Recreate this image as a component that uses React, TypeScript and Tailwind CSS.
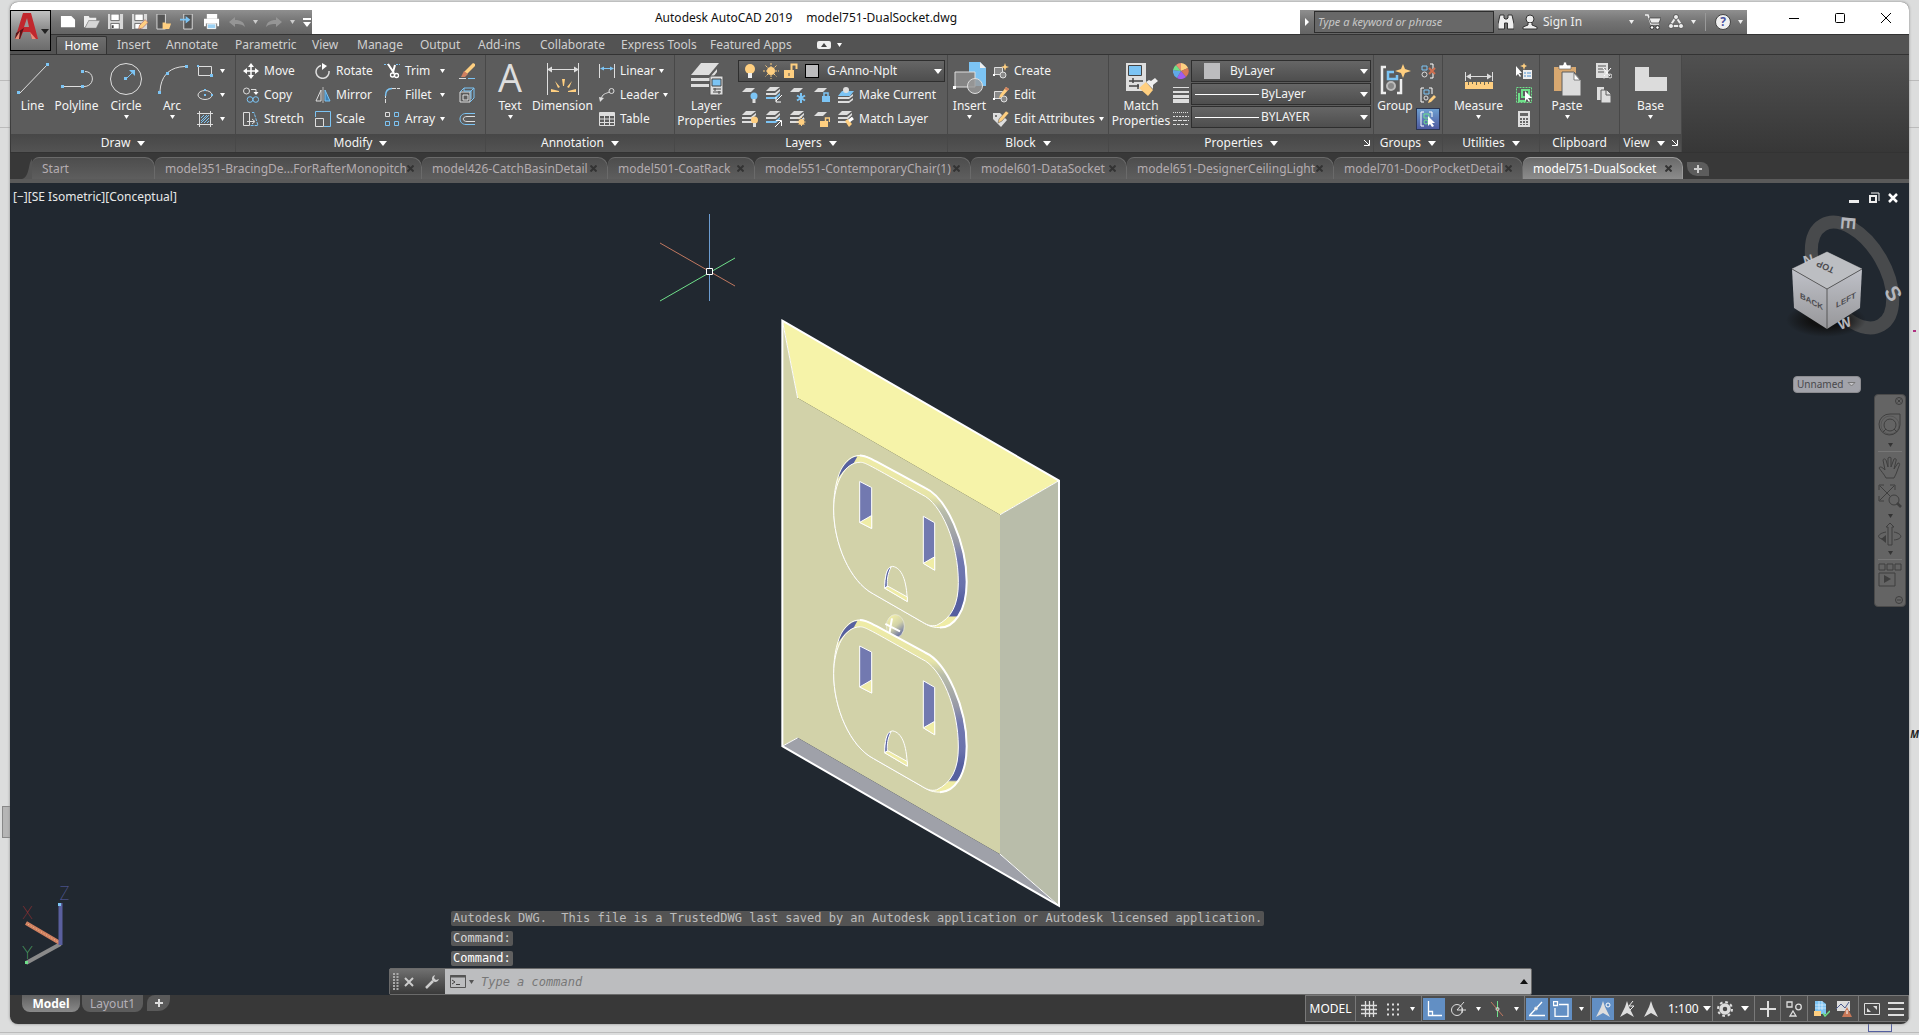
import React from "react";

type Kids = { children?: React.ReactNode };
const W = "#dedede";
const B = "#7cc4f4";
const Y = "#ffcf80";
const G = "#6fe08a";

function Ico({ s = 16, v, children }: Kids & { s?: number; v?: number }) {
  const n = v ?? s;
  return (
    <svg width={s} height={s} viewBox={`0 0 ${n} ${n}`} fill="none" stroke={W} strokeWidth="1" className="shrink-0" aria-hidden="true">
      {children}
    </svg>
  );
}

function Arrow({ big = false, color = "#fff" }: { big?: boolean; color?: string }) {
  return (
    <svg width={big ? 8 : 5} height={big ? 5 : 4} viewBox="0 0 8 5" preserveAspectRatio="none" className="shrink-0" aria-hidden="true">
      <path d="M0 0h8L4 5z" fill={color} />
    </svg>
  );
}

const Sq = ({ x, y, c = B, r = 3 }: { x: number; y: number; c?: string; r?: number }) => (
  <rect x={x} y={y} width={r} height={r} fill={c} stroke="none" />
);

/* ---------- small ribbon icons ---------- */
const icons = {
  rect: (
    <Ico>
      <path d="M1.500 3.500h13v9h-13z" />
      <Sq x={0} y={2} r={2} /><Sq x={13} y={11} />
    </Ico>
  ),
  ellipse: (
    <Ico>
      <ellipse cx="8" cy="8" rx="7" ry="4.500" />
      <Sq x={7} y={7} r={2} /><Sq x={7} y={2} r={2} /><Sq x={14} y={7} r={2} />
    </Ico>
  ),
  hatch: (
    <Ico>
      <path d="M2.500 0v16M13.500 0v16M0 2.500h16M0 13.500h16" />
      <path d="M4 7l3-3M4 10l6-6M4 12l8-8M7 12l5-5M10 12l2-2" stroke={B} />
    </Ico>
  ),
  move: (
    <Ico>
      <path d="M8 2v12M2 8h12" strokeWidth="1.500" stroke="#fff" />
      <path d="M8 0l3 4H5zM8 16l3-4H5zM0 8l4-3v6zM16 8l-4-3v6z" fill="#fff" stroke="none" />
    </Ico>
  ),
  rotate: (
    <Ico>
      <path d="M6 2.500A6.500 6.500 0 1 0 14 8" strokeWidth="1.500" />
      <path d="M7 0l5 3-5 4z" fill="#fff" stroke="none" />
    </Ico>
  ),
  trim: (
    <Ico>
      <path d="M0 1.500h4M12 1.500h4" stroke={B} strokeDasharray="2 1" />
      <path d="M4 1l6 9M11 2L9 9" stroke="#fff" strokeWidth="2" />
      <circle cx="8.500" cy="12" r="2" stroke="#fff" strokeWidth="1.300" /><circle cx="12.500" cy="12.500" r="2" stroke="#fff" strokeWidth="1.300" />
    </Ico>
  ),
  erase: (
    <Ico>
      <path d="M5 9L14 0l2 1v2l-8 8z" fill={Y} stroke="none" />
      <path d="M5 8l4 3-3 3H2z" fill="#d08060" stroke="none" />
      <path d="M0 15.500h7" /><path d="M9 15.500h7" stroke={B} />
    </Ico>
  ),
  copy: (
    <Ico>
      <circle cx="3.500" cy="4" r="3" />
      <path d="M8 2.500h5V6" /><path d="M10.500 5h5L13 8z" fill="#fff" stroke="none" />
      <circle cx="7" cy="12.500" r="2.800" stroke={B} /><circle cx="12.800" cy="12.500" r="2.800" stroke={B} />
    </Ico>
  ),
  mirror: (
    <Ico>
      <path d="M6 3v11H1z" /><path d="M10 3v11h5z" fill="#3d83b8" stroke={B} /><path d="M8 0v16" strokeWidth=".7" />
    </Ico>
  ),
  fillet: (
    <Ico>
      <path d="M1.500 16V9M8 1.500h8" strokeDasharray="4 1" /><path d="M1.500 9C1.500 4 4 1.500 8 1.500" stroke={B} strokeWidth="1.500" />
    </Ico>
  ),
  explode: (
    <Ico>
      <path d="M1 5h10v10H1z" /><path d="M4 8h5v5H4z" />
      <path d="M1 5l4-4h10v10l-4 4M11 5l4-4M5 1v3h7v8" stroke={B} />
    </Ico>
  ),
  stretch: (
    <Ico>
      <path d="M.5 1.500h6v13h-6zM4 10.500h7M9 8l3 2.500L9 13" /><path d="M9 1.500h2l4 13H7" stroke={B} strokeDasharray="3 1" />
    </Ico>
  ),
  scale: (
    <Ico>
      <path d="M.5 6V.5h15v15H9" stroke={B} /><path d="M.5 7.500h8v8h-8z" />
    </Ico>
  ),
  array: (
    <Ico>
      <path d="M1.500 1.500h4v4h-4z" /><path d="M10.500 1.500h4v4h-4zM1.500 10.500h4v4h-4zM10.500 10.500h4v4h-4z" stroke={B} />
    </Ico>
  ),
  offset: (
    <Ico>
      <path d="M16 2.500H7C-1 2.500-1 13.500 7 13.500h9" stroke={B} /><path d="M16 5.500H8c-5 0-5 5 0 5h8" />
    </Ico>
  ),
  linear: (
    <Ico>
      <path d="M.5 1v14M15.500 1v14" /><path d="M2 5.500h12" stroke={B} /><path d="M1 5.500l4-2v4zM15 5.500l-4-2v4z" fill={B} stroke="none" />
    </Ico>
  ),
  leader: (
    <Ico>
      <path d="M2 13C3 6 7 7 10 5" /><circle cx="12.500" cy="4" r="2.500" /><path d="M0 10l5 1-4 4z" fill={W} stroke="none" />
    </Ico>
  ),
  table: (
    <Ico>
      <path d="M.5 1.500h15v13H.5zM.5 4.500h15M.5 8h15M.5 11.500h15M5.500 4v10M10.500 4v10" /><path d="M1 3h15" strokeWidth="2" />
    </Ico>
  ),
  create: (
    <Ico>
      <path d="M1.500 4.500h8v7h-8z" fill="#888" /><circle cx="10" cy="12" r="3" fill="#888" /><Sq x={0} y={11} c="#fff" r={2} />
      <path d="M12 0l1 3 3 1-3 1-1 3-1-3-3-1 3-1z" fill={Y} stroke="none" />
    </Ico>
  ),
  editBlk: (
    <Ico>
      <path d="M1.500 4.500h8v7h-8z" fill="#888" /><circle cx="11" cy="12" r="3" fill="#888" /><Sq x={0} y={11} c="#fff" r={2} />
      <path d="M13 0l3 2-7 8-3 1 1-3z" fill={Y} stroke="none" /><path d="M13 0l3 2-1.500 2-3-2z" fill="#d08060" stroke="none" />
    </Ico>
  ),
  editAtt: (
    <Ico>
      <path d="M0 2h7l7 7-6 7-8-8z" fill={W} stroke="none" /><circle cx="3" cy="5" r="1" fill="#555" stroke="none" />
      <path d="M13 0l3 2-7 8-4 2 1-4z" fill={Y} stroke="#555" strokeWidth=".5" />
    </Ico>
  ),
};

const Sheet = () => <path d="M4 1h9L9 5H0z" fill={W} stroke="none" />;
const Stack = ({ c = W }: { c?: string }) => (
  <g stroke="none">
    <path d="M4 0h10L9 4H0z" fill={W} />
    <path d="M0 6h9l5-4v2L10 8H0z" fill={W} />
    <path d="M0 10h9l5-4v2l-4 4H0z" fill={c} />
  </g>
);
const layerIcons: [string, React.ReactNode][][] = [
  [
    ["Off", <><Sheet /><circle cx="12" cy="9" r="3.500" fill={B} stroke="none" /><path d="M12 12v4" strokeWidth="3" /></>],
    ["Isolate", <><Stack c={B} /><path d="M16 8l-6 6M10 10v5h5" stroke="#fff" /></>],
    ["Freeze", <><Sheet /><path d="M11 6v10M7 8.500l8 5M15 8.500l-8 5" stroke={B} strokeWidth="2" /></>],
    ["Lock", <><Sheet /><path d="M8 9h8v6H8z" fill={B} stroke="none" /><path d="M10 9V6h4v3" stroke={B} strokeWidth="1.500" /></>],
    ["Make Current", <><path d="M0 10h11l4-3v2l-4 3H0zM0 14h11l4-3v2l-4 3H0z" fill={W} stroke="none" /><path d="M4 4h12l-4 5H0z" fill={B} stroke="none" /><circle cx="8" cy="3" r="3" fill={W} stroke="none" /></>],
  ],
  [
    ["Turn All On", <><Stack /><circle cx="12.500" cy="9" r="3.500" fill={Y} stroke="none" /><path d="M12.500 12v4" strokeWidth="3" /></>],
    ["Unisolate", <><Stack c={B} /><path d="M9 16l6-6M10 9.500h5.500V15" stroke="#fff" /></>],
    ["Thaw All", <><Stack /><circle cx="11.500" cy="11" r="3" fill={Y} stroke="none" /><path d="M11.500 6v10M6.500 11h10M8 7.500l7 7M15 7.500l-7 7" stroke={Y} strokeDasharray="1 1" /></>],
    ["Unlock", <><Sheet /><path d="M6 10h8v6H6z" fill={Y} stroke="none" /><path d="M11.500 10V7h4v4" stroke={Y} strokeWidth="1.500" /></>],
    ["Match Layer", <><Stack /><path d="M7 10l3-2 4 5-3 3z" fill={Y} stroke="none" /><path d="M11 10l4-3" stroke="#fff" strokeWidth="3" /></>],
  ],
];

/* ---------- ribbon parts ---------- */
function Panel({ title, w, drop = true, corner = false, children }: Kids & { title: string; w: string; drop?: boolean; corner?: boolean }) {
  return (
    <section aria-label={title} className={`${w} flex shrink-0 flex-col border-r border-[#484848] bg-[#5c5c5c]`}>
      <div className="flex h-20 items-start pt-1">{children}</div>
      <div className="relative flex flex-1 items-center justify-center gap-[7px] bg-linear-to-b from-[#474747] to-[#535353]">
        <span>{title}</span>
        {drop && <Arrow big />}
        {corner && (
          <svg width="6" height="6" viewBox="0 0 6 6" className={title === "View" ? "" : "absolute right-[3px]"} aria-hidden="true">
            <path d="M0 0l5 5M5.500 0v5.500H0" stroke="#fff" fill="none" />
          </svg>
        )}
      </div>
    </section>
  );
}

function Big({ w, label, drop, children }: Kids & { w: string; label: React.ReactNode; drop?: boolean }) {
  return (
    <button className={`${w} flex shrink-0 flex-col items-center whitespace-nowrap leading-[15px]`}>
      <span className="flex h-[39px] items-center">{children}</span>
      <span>{label}</span>
      {drop && <span className="mt-[2px]"><Arrow /></span>}
    </button>
  );
}

function Small({ icon, label, drop }: { icon: React.ReactNode; label?: string; drop?: boolean }) {
  return (
    <button className="flex h-6 items-center whitespace-nowrap" aria-label={label ?? "Tool"}>
      {icon}
      {label && <span className="ml-[5px]">{label}</span>}
      {drop && <span className="ml-auto pl-1"><Arrow /></span>}
    </button>
  );
}

const Col = ({ w = "", children }: Kids & { w?: string }) => <div className={`${w} flex shrink-0 flex-col`}>{children}</div>;

const combo = "flex items-center border border-[#2e2e2e] bg-linear-to-b from-[#666] to-[#4e4e4e]";

function Combo({ label, value, children }: Kids & { label: string; value: string }) {
  return (
    <div className={`${combo} h-[22px] w-[180px] pr-[2px]`}>
      {children}
      <select aria-label={label} className="min-w-0 flex-1 appearance-none bg-transparent outline-none">
        <option>{value}</option>
      </select>
      <Arrow big />
    </div>
  );
}

const menuTabs: [string, string][] = [
  ["Insert", "w-[49px]"], ["Annotate", "w-[69px]"], ["Parametric", "w-[77px]"], ["View", "w-[45px]"], ["Manage", "w-[63px]"],
  ["Output", "w-[58px]"], ["Add-ins", "w-[62px]"], ["Collaborate", "w-[81px]"], ["Express Tools", "w-[89px]"], ["Featured Apps", "w-[107px]"],
];

const fileTabs: [string, string][] = [
  ["Start", "w-[123px]"], ["model351-BracingDe...ForRafterMonopitch", "w-[267px]"], ["model426-CatchBasinDetail", "w-[186px]"],
  ["model501-CoatRack", "w-[147px]"], ["model551-ContemporaryChair(1)", "w-[216px]"], ["model601-DataSocket", "w-[156px]"],
  ["model651-DesignerCeilingLight", "w-[207px]"], ["model701-DoorPocketDetail", "w-[189px]"], ["model751-DualSocket", "w-[160px]"],
];

function QuickAccess() {
  const items: [string, React.ReactNode][] = [
    ["New", <path d="M1 2h11l4 4v8H1z" fill="#fff" stroke="none" />],
    ["Open", <><path d="M0 2h5l1 2h7v3H5L1 14H0z" fill="#eee" stroke="none" /><path d="M5 7h12l-4 8H1z" fill="#d6d6d6" stroke="#777" strokeWidth=".5" /></>],
    ["Save", <><path d="M0 0h16v16H0z" fill="#d8d8d8" stroke="none" /><path d="M3 0h9v7H3zM3 10h9v6H3z" fill="#fff" stroke="#666" /><path d="M5 12v3" stroke="#444" strokeWidth="2" /></>],
    ["Save As", <><path d="M0 0h16v16H0z" fill="#d8d8d8" stroke="none" /><path d="M3 0h9v7H3zM3 10h6v6H3z" fill="#fff" stroke="#666" /><path d="M14 6l3 3-6 6-4 1 1-4z" fill={Y} stroke="#a66" strokeWidth=".7" /></>],
    ["Open from Web", <><path d="M1 0h9v16H1z" fill="#555" stroke="#ddd" /><path d="M7 9h3l1 1h5l-2 6H7z" fill={Y} stroke="none" /></>],
    ["Save to Web", <><path d="M4 0h9v16H4z" fill="#555" stroke="#ddd" /><path d="M0 5h6V2l5 4-5 4V7H0z" fill={B} stroke="none" /></>],
    ["Plot", <><path d="M3 0h11v5H3z" fill="#fff" stroke="none" /><path d="M0 5h16v8h-2v-3H2v3H0z" fill="#fff" stroke="none" /><path d="M3.500 10.500h9v5h-9z" fill="#9bd0f2" stroke="#fff" /></>],
  ];
  return (
    <div className="flex h-6 w-[262px] items-center gap-2 self-end bg-linear-to-b from-[#8f8f8f] via-[#737373] to-[#646464] pl-[10px]">
      {items.map(([n, d]) => (
        <button key={n} aria-label={n}><Ico v={17}>{d}</Ico></button>
      ))}
      <button aria-label="Undo" className="ml-px"><Ico><path d="M0 8l6-5v3c6 0 9 2 10 7-3-3-6-3-10-3v3z" fill="#959595" stroke="none" /></Ico></button>
      <Arrow color="#ccc" />
      <button aria-label="Redo"><Ico><path d="M16 8l-6-5v3C4 6 1 8 0 13c3-3 6-3 10-3v3z" fill="#959595" stroke="none" /></Ico></button>
      <Arrow color="#ccc" />
      <button aria-label="Customize" className="flex flex-col items-center gap-[2px]"><span className="h-[2px] w-2 bg-white" /><Arrow big /></button>
    </div>
  );
}

function InfoCenter() {
  return (
    <div className="mr-6 flex h-6 w-[447px] shrink-0 items-center self-end bg-linear-to-b from-[#8f8f8f] via-[#737373] to-[#646464]">
      <span className="flex w-[14px] justify-center">
        <svg width="4" height="8" viewBox="0 0 4 8" aria-hidden="true"><path d="M0 0l4 4-4 4z" fill="#fff" /></svg>
      </span>
      <input aria-label="Search" placeholder="Type a keyword or phrase" className="h-[22px] w-[180px] border border-[#2e2e2e] bg-[#686868] px-[3px] pb-[2px] text-[11px] italic outline-none placeholder:text-[#c8c8c8]" />
      <button aria-label="Find" className="ml-1"><Ico><path d="M2 1h4v3l1 1h2l1-1V1h4l2 9v5H9.500V9h-3v6H0v-5z" fill="#eee" stroke="#333" /></Ico></button>
      <button className="ml-2 flex items-center gap-[5px] text-[#eee]">
        <Ico><circle cx="8" cy="5" r="4" fill="#eee" stroke="#333" /><path d="M6 9v2l-5 2v2h14v-2l-5-2V9" fill="#eee" stroke="#333" /></Ico>
        Sign In
      </button>
      <span className="ml-auto flex items-center gap-[7px] pr-1">
        <Arrow color="#eee" />
        <button aria-label="Store" className="ml-1"><Ico><path d="M0 1h3l3 9h8" stroke="#eee" strokeWidth="1.500" /><path d="M4 4h12l-2 5H6z" fill="#eee" stroke="#333" strokeWidth=".7" /><circle cx="7" cy="13.500" r="1.800" fill="#fff" stroke="#333" /><circle cx="12.500" cy="13.500" r="1.800" fill="#fff" stroke="#333" /></Ico></button>
        <button aria-label="Apps"><Ico><path d="M8 3L2 12h12z" stroke="#eee" strokeWidth="2" /><circle cx="8" cy="3" r="2.500" fill="#eee" stroke="#333" strokeWidth=".7" /><circle cx="3" cy="12" r="2.500" fill="#eee" stroke="#333" strokeWidth=".7" /><circle cx="13" cy="12" r="2.500" fill="#eee" stroke="#333" strokeWidth=".7" /></Ico></button>
        <Arrow color="#eee" />
        <span className="mx-[2px] h-[18px] w-px bg-[#999]" />
        <button aria-label="Help" className="flex size-4 items-center justify-center rounded-full border border-[#444] bg-[#f0f0f0] text-[12px] font-bold leading-3 text-[#4a54a0]">?</button>
        <Arrow color="#eee" />
      </span>
    </div>
  );
}

function Ribbon() {
  return (
    <div className="flex h-[99px] border-y border-[#333] bg-linear-to-b from-[#505050] to-[#373737] pl-px text-[12px] text-[#f4f4f4]">
      <Panel title="Draw" w="w-[225px]">
        <Big w="w-[43px]" label="Line"><Ico s={34}><path d="M4 31L31 3" /><Sq x={1} y={29} /><Sq x={30} y={1} /></Ico></Big>
        <Big w="w-[45px]" label="Polyline"><Ico s={34}><path d="M4 24.500h20c11 0 11-15 1-15" /><Sq x={1} y={23} /><Sq x={21} y={23} /><Sq x={21} y={8} /></Ico></Big>
        <Big w="w-[54px]" label="Circle" drop><Ico s={34}><circle cx="17" cy="17" r="15.500" /><path d="M17 17l7-7" stroke={B} /><path d="M26 8v6l-6-6z" fill={B} stroke="none" /><Sq x={15} y={15} /></Ico></Big>
        <Big w="w-[38px]" label="Arc" drop><Ico s={34}><path d="M5 29C6 14 14 5 30 4.500" strokeDasharray="18 3" /><Sq x={3} y={29} /><Sq x={11} y={10} /><Sq x={30} y={3} /></Ico></Big>
        <Col w="w-[34px] pl-[6px]">
          <Small icon={icons.rect} drop /><Small icon={icons.ellipse} drop /><Small icon={icons.hatch} drop />
        </Col>
      </Panel>
      <Panel title="Modify" w="w-[250px]">
        <Col w="w-[79px] pl-[7px]"><Small icon={icons.move} label="Move" /><Small icon={icons.copy} label="Copy" /><Small icon={icons.stretch} label="Stretch" /></Col>
        <Col w="w-[69px]"><Small icon={icons.rotate} label="Rotate" /><Small icon={icons.mirror} label="Mirror" /><Small icon={icons.scale} label="Scale" /></Col>
        <Col w="w-[61px]"><Small icon={icons.trim} label="Trim" drop /><Small icon={icons.fillet} label="Fillet" drop /><Small icon={icons.array} label="Array" drop /></Col>
        <Col w="w-[30px] pl-[14px]"><Small icon={icons.erase} /><Small icon={icons.explode} /><Small icon={icons.offset} /></Col>
      </Panel>
      <Panel title="Annotation" w="w-[189px]">
        <Big w="w-[48px]" label="Text" drop>
          <svg width="34" height="34" viewBox="0 0 34 34" className="overflow-visible" aria-hidden="true"><text x="17" y="30" textAnchor="middle" fontFamily="Open Sans, sans-serif" fontSize="38" fontWeight="500" fill={W}>A</text></svg>
        </Big>
        <Big w="w-[57px]" label="Dimension">
          <Ico s={34}><path d="M1.500 1v32M32.500 1v32M3 7.500h28" /><path d="M1 7.500l5-3v6zM33 7.500l-5-3v6z" fill={W} stroke="none" />
            <path d="M16 17h3l-1 7h-1zM9 19l5 6-2 1zM26 19l-5 6 2 1zM5 27l8 2v1H5zM30 27l-8 2v1h8z" fill={Y} stroke="none" /></Ico>
        </Big>
        <Col w="w-[72px] pl-[8px]"><Small icon={icons.linear} label="Linear" drop /><Small icon={icons.leader} label="Leader" drop /><Small icon={icons.table} label="Table" /></Col>
      </Panel>
      <Panel title="Layers" w="w-[273px]">
        <Big w="w-[63px]" label={<>Layer<br />Properties</>}>
          <Ico s={34}>
            <path d="M11 1h18L19 13H1z" fill={W} stroke="none" /><path d="M1 16h18l8-9v3l-7 9H1zM1 22h18v3H1z" fill={W} stroke="none" />
            <path d="M20 14h13v19H20z" fill={W} stroke="#555" /><path d="M22 17h9v7h-9z" fill={B} stroke="#444" /><path d="M23 27h8M23 30h8M25 26v3M29 29v3" stroke="#444" />
          </Ico>
        </Big>
        <Col w="w-[207px]">
          <div className={`${combo} mt-px h-[22px] w-full gap-1 pl-1 pr-[2px]`}>
            <Ico><circle cx="7" cy="6" r="5" fill={Y} stroke="none" /><path d="M7 10v5" stroke="#eee" strokeWidth="4" /></Ico>
            <Ico><circle cx="8" cy="8" r="4" fill={Y} stroke="none" /><path d="M8 0v16M0 8h16M2.500 2.500l11 11M13.500 2.500l-11 11" stroke={Y} strokeDasharray="2 1" /></Ico>
            <Ico><path d="M1 7h10v8H1z" fill={Y} stroke="none" /><path d="M8.500 7V1.500h5V6" stroke={Y} strokeWidth="2" /><path d="M6 10v3" stroke="#555" /></Ico>
            <span className="ml-[2px] mr-1 size-[14px] shrink-0 border border-black bg-[#bcbcbe]" />
            <select aria-label="Layer" className="min-w-0 flex-1 appearance-none bg-transparent outline-none"><option>G-Anno-Nplt</option></select>
            <Arrow big />
          </div>
          {layerIcons.map((row, i) => (
            <div key={i} className="flex h-6 items-center gap-2 pl-1 nth-2:mt-px">
              {row.map(([n, d], k) => (
                <button key={n} aria-label={n} className="flex items-center gap-[5px] whitespace-nowrap"><Ico>{d}</Ico>{k === 4 && n}</button>
              ))}
            </div>
          ))}
        </Col>
      </Panel>
      <Panel title="Block" w="w-[161px]">
        <Big w="w-[43px]" label="Insert" drop>
          <Ico s={34}><path d="M16 0h11l6 6v18H16z" fill={B} stroke="none" /><path d="M27 0v6h6z" fill="#eee" stroke="none" /><path d="M2 10h20v15H2z" fill="#858585" /><circle cx="22" cy="24" r="7.500" fill="#999" fillOpacity=".8" /><Sq x={0} y={24} c="#fff" /></Ico>
        </Big>
        <Col w="w-[110px] pl-[2px]"><Small icon={icons.create} label="Create" /><Small icon={icons.editBlk} label="Edit" /><Small icon={icons.editAtt} label="Edit Attributes" drop /></Col>
      </Panel>
      <Panel title="Properties" w="w-[265px]" corner>
        <Big w="w-[64px]" label={<>Match<br />Properties</>}>
          <Ico s={34}><path d="M2 1h20v28H2z" fill={W} stroke="none" /><path d="M4.500 3.500h13v10h-13z" fill={B} stroke="#444" /><path d="M5 19h14M5 24h10M9 16v5M14 22v5" stroke="#444" strokeWidth="1.500" /><path d="M15 26l7-6 7 8-5 6z" fill={Y} stroke="none" /><path d="M22 20l3-2 2 1 4-3 3 3-5 4v4z" fill="#eee" stroke="none" /></Ico>
        </Big>
        <Col w="w-[18px]">
          <Small icon={<Ico><path d="M8 8V0a8 8 0 0 1 7 5z" fill={Y} stroke="none" /><path d="M8 8l7-3a8 8 0 0 1-2 9z" fill="#d87858" stroke="none" /><path d="M8 8l5 6a8 8 0 0 1-9 1z" fill="#a05cf0" stroke="none" /><path d="M8 8l-4 7a8 8 0 0 1-4-8z" fill="#60a8e8" stroke="none" /><path d="M8 8L0 7a8 8 0 0 1 3-5z" fill={G} stroke="none" /><path d="M8 8L3 2a8 8 0 0 1 5-2z" fill="#e89070" stroke="none" /></Ico>} />
          <Small icon={<Ico><path d="M0 .5h16" /><path d="M0 5h16" strokeWidth="2" /><path d="M0 9.500h16" strokeWidth="3" /><path d="M0 14h16" strokeWidth="4" /></Ico>} />
          <Small icon={<Ico><path d="M0 1.500h16" strokeDasharray="1 1" /><path d="M0 5.500h16" strokeDasharray="2 1" /><path d="M0 9.500h16" strokeDasharray="4 1" /><path d="M0 13.500h16" strokeDasharray="3 1" /></Ico>} />
        </Col>
        <div className="flex flex-col gap-px pt-px">
          <Combo label="Object color" value="ByLayer"><span className="ml-3 mr-[10px] size-4 bg-[#bcbcbe]" /></Combo>
          <Combo label="Lineweight" value="ByLayer"><span className="ml-[3px] mr-[2px] h-px w-16 bg-white" /></Combo>
          <Combo label="Linetype" value="BYLAYER"><span className="ml-[3px] mr-[2px] h-px w-16 bg-white" /></Combo>
        </div>
      </Panel>
      <Panel title="Groups" w="w-[69px]">
        <Big w="w-[42px]" label="Group">
          <Ico s={34}><path d="M8 5H4v26h4M19 31h4V17" strokeWidth="2.500" stroke="#eee" /><path d="M16 10h-6v7h9v-4" stroke={B} strokeWidth="2.500" /><circle cx="13" cy="24" r="4" fill="#888" stroke="#bbb" strokeWidth="2" /><path d="M25 2l2 5 6 2-6 2-2 5-2-5-6-2 6-2z" fill={Y} stroke="none" /></Ico>
        </Big>
        <Col w="w-[24px] items-center">
          <Small icon={<Ico><path d="M2 3h5v4H2z" stroke={B} /><circle cx="4.500" cy="11.500" r="2.500" /><path d="M10 1h3v5M13 10v5h-3" stroke="#fff" /><path d="M9 5l6 6M15 5l-6 6" stroke="#d07050" strokeWidth="2" /></Ico>} />
          <Small icon={<Ico><path d="M4 1H1v14h3M9 1h3v6" stroke="#fff" /><path d="M4 3h5v4H4z" stroke={B} /><circle cx="6" cy="11" r="2" /><path d="M9 13l5-5 2 2-5 5-3 1z" fill={Y} stroke="none" /></Ico>} />
          <button aria-label="Group Selection" className="mt-px flex h-[22px] w-6 items-center justify-center border border-[#2b3550] bg-linear-to-b from-[#6d9fd0] to-[#4f5ba0]">
            <Ico><path d="M4 1H1v14h3M9 1h3v5" stroke="#fff" /><path d="M4 3h5v4H4z" stroke={G} /><circle cx="6" cy="11" r="2" stroke={G} /><path d="M8 5v10l2-2 2 3 2-1-2-3h3z" fill="#fff" stroke="none" /></Ico>
          </button>
        </Col>
      </Panel>
      <Panel title="Utilities" w="w-[97px]">
        <Big w="w-[71px]" label="Measure" drop>
          <Ico s={34}><path d="M3.500 10v9M30.500 10v9M5 14.500h24" /><path d="M4 14.500l5-3v6zM30 14.500l-5-3v6z" fill={W} stroke="none" /><path d="M3 20h28v7H3z" fill={Y} stroke="none" /><path d="M6.500 20v3M10.500 20v2M14.500 20v3M18.500 20v2M22.500 20v3M26.500 20v2" stroke="#665" /></Ico>
        </Big>
        <Col w="pl-[2px]">
          <Small icon={<Ico><path d="M0 3v10l2-2 2 3 1-1-2-3h3z" fill="#fff" stroke="none" /><path d="M7 7h9v9H7z" fill="#eee" stroke="none" /><path d="M8 10h2M8 13h2M11 10h4M11 13h4" stroke="#4a90d0" /><path d="M8 0l1 2 2 1-2 1-1 3-1-3-3-1 3-1z" fill={Y} stroke="none" /></Ico>} />
          <Small icon={<Ico><path d="M.5 .5h15v15H.5z" stroke={G} strokeDasharray="2 1" /><path d="M6 3h7v7H6zM3 6v8h7" stroke={G} strokeWidth="2" /><path d="M9 4v10l2-2 2 3 1-1-2-3h4z" fill="#fff" stroke="none" /></Ico>} />
          <Small icon={<Ico><path d="M2 0h12v16H2z" fill={W} stroke="none" /><path d="M4 2h8v3H4zM4 7h2v2H4zM7 7h2v2H7zM10 7h2v2h-2zM4 10h2v2H4zM7 10h2v2H7zM10 10h2v2h-2zM4 13h2v1H4zM7 13h2v1H7zM10 13h2v1h-2z" fill="#666" stroke="none" /></Ico>} />
        </Col>
      </Panel>
      <Panel title="Clipboard" w="w-[80px]" drop={false}>
        <Big w="w-[54px]" label="Paste" drop>
          <Ico s={34}><path d="M4 5h22v24H4z" fill="#d8a870" stroke="none" /><path d="M9 7V3h4l1-3h2l1 3h4v4z" fill="#fff" stroke="#555" strokeWidth=".6" /><path d="M12 10h12l7 8v16H12z" fill="#dcdcdc" stroke="#5c5c5c" /><path d="M24 11v7h6z" fill="#fff" stroke="#555" strokeWidth=".7" /></Ico>
        </Big>
        <Col w="pl-[2px]">
          <Small icon={<Ico><path d="M0 0h12v15H0z" fill={W} stroke="none" /><path d="M2 3h8M2 6h8M2 9h6" stroke="#555" /><path d="M7 5l7 8M15 5l-7 8" stroke="#fff" /><circle cx="8" cy="13" r="2" /><circle cx="14" cy="13" r="2" /></Ico>} />
          <Small icon={<Ico><path d="M1 0h7v13H1z" fill={W} stroke="none" /><path d="M5 3h6l4 4v9H5z" fill={W} stroke="#5c5c5c" /><path d="M10 3v5h5" stroke="#5c5c5c" /></Ico>} />
        </Col>
      </Panel>
      <Panel title="View" w="w-[62px]" corner>
        <Big w="w-full" label="Base" drop><Ico s={34}><path d="M1 5h14v10h18v14H1z" fill="#dcdcdc" stroke="none" /></Ico></Big>
      </Panel>
    </div>
  );
}

const rimPath = "M191 520C191 440 220 380 270 380C290 380 300 387 465 465C530 490 590 610 590 710C590 790 550 830 510 830C480 830 470 822 450 812L310 742C240 710 191 610 191 520Z";
const facePath = "M191 520C192 450 225 398 270 398C285 398 292 402 455 482C515 505 565 610 565 712C565 770 545 805 500 824C480 828 470 822 450 812L310 742C240 710 191 610 191 520Z";

function Outlet({ dy }: { dy: number }) {
  return (
    <g transform={`translate(0 ${dy})`} stroke="#fff" strokeWidth="1">
      <path d={rimPath} fill="url(#rim)" vectorEffect="non-scaling-stroke" />
      <path d="M205 440C215 405 240 385 262 383L250 402C232 408 215 425 205 440Z" fill="#5660a0" stroke="none" />
      <path d={facePath} fill="#d2d2a9" vectorEffect="non-scaling-stroke" />
      <path d="M270 380C290 380 300 387 465 465C530 490 590 610 590 710C590 790 550 830 510 830" fill="none" strokeWidth="2" vectorEffect="non-scaling-stroke" />
      <path d="M269 448l36 16v107l-36-16z" fill="#7279b0" vectorEffect="non-scaling-stroke" />
      <path d="M269 555l36-18v34z" fill="#efeca6" vectorEffect="non-scaling-stroke" />
      <path d="M460 539l34 17v124l-34-18z" fill="#7279b0" vectorEffect="non-scaling-stroke" />
      <path d="M460 662l34-17v35z" fill="#efeca6" vectorEffect="non-scaling-stroke" />
      <path d="M344 727C344 700 350 670 368 670C395 674 410 705 412 762Z" fill="#d2d2a9" vectorEffect="non-scaling-stroke" />
      <path d="M344 727C344 700 350 672 363 672C353 690 351 705 352 722Z" fill="#5660a0" vectorEffect="non-scaling-stroke" />
      <path d="M344 727l10-5 58 28v12z" fill="#efeca6" vectorEffect="non-scaling-stroke" />
    </g>
  );
}

function Model() {
  return (
    <svg viewBox="0 0 900 1568" preserveAspectRatio="none" className="absolute left-[760px] top-[127px] h-[600px] w-[300px]" role="img" aria-label="Dual socket model">
      <defs>
        <linearGradient id="rim" gradientUnits="userSpaceOnUse" x1="0" y1="380" x2="0" y2="830">
          <stop offset="0" stopColor="#efeca6" /><stop offset=".24" stopColor="#e6e4a8" /><stop offset=".32" stopColor="#b9bdaa" />
          <stop offset=".5" stopColor="#989aa6" /><stop offset=".6" stopColor="#7279b0" /><stop offset=".76" stopColor="#6a72ac" />
          <stop offset=".84" stopColor="#5660a0" /><stop offset=".93" stopColor="#5660a0" /><stop offset=".94" stopColor="#efeca6" />
        </linearGradient>
        <linearGradient id="screw" x1=".2" y1="0" x2=".8" y2="1">
          <stop offset="0" stopColor="#f6f3a9" /><stop offset=".5" stopColor="#d2d2a9" /><stop offset="1" stopColor="#5660a0" />
        </linearGradient>
      </defs>
      <path d="M37 28L83 230L690 535V1422L83 1118L37 1140Z" fill="#d2d2a9" />
      <path d="M37 28L867 446L690 535L83 230Z" fill="#f6f3a9" />
      <path d="M867 446V1557L690 1422V535Z" fill="#b9bdaa" />
      <path d="M37 1140L83 1118L690 1422L867 1557Z" fill="#9fa1a9" />
      <path d="M37 28L83 230M690 535L867 446M37 1140L83 1118M690 1422L867 1557" stroke="#fff" fill="none" vectorEffect="non-scaling-stroke" />
      <path d="M37 28L867 446V1557L37 1140Z" stroke="#fff" strokeWidth="2" fill="none" vectorEffect="non-scaling-stroke" />
      <Outlet dy={0} />
      <ellipse cx="376" cy="826" rx="27" ry="30" fill="url(#screw)" stroke="#e8e8e0" strokeWidth=".7" vectorEffect="non-scaling-stroke" />
      <path d="M366 806L358 846M346 820L390 840" stroke="#fff" strokeWidth="2" vectorEffect="non-scaling-stroke" />
      <Outlet dy={430} />
    </svg>
  );
}

function ViewCube() {
  const ring = { fontFamily: "Liberation Sans, sans-serif", fontWeight: 700, fill: "#b4b6bc" };
  const face = { fontFamily: "Liberation Sans, sans-serif", fontWeight: 700, fill: "#4c4c50" };
  return (
    <svg width="125" height="135" viewBox="1780 210 125 135" className="absolute right-1 top-[27px]" role="img" aria-label="View cube">
      <defs>
        <radialGradient id="sh"><stop offset=".4" stopColor="#111" /><stop offset="1" stopColor="#111" stopOpacity="0" /></radialGradient>
        <linearGradient id="cubeside" x1="0" y1="0" x2="0" y2="1"><stop offset="0" stopColor="#bfc1c8" /><stop offset="1" stopColor="#97979a" /></linearGradient>
      </defs>
      <ellipse cx="1852" cy="275" rx="58" ry="33" transform="rotate(60 1852 275)" fill="none" stroke="#484a4c" strokeWidth="13" />
      <ellipse cx="1826" cy="320" rx="40" ry="17" fill="url(#sh)" />
      <text {...ring} fontSize="20" transform="translate(1842 216) rotate(95)">E</text>
      <text {...ring} fontSize="21" transform="translate(1887 297) rotate(60)" textAnchor="middle">S</text>
      <text {...ring} fontSize="14" transform="translate(1812 254) rotate(-195)">N</text>
      <text {...ring} fontSize="14" transform="translate(1840 330) rotate(-20)">W</text>
      <path d="M1827 252l35 17-35 20-35-20z" fill="#bcbec2" stroke="#d8d8d8" strokeWidth=".5" />
      <path d="M1792 269l35 20v40l-33-21z" fill="url(#cubeside)" />
      <path d="M1862 269l-35 20v40l33-21z" fill="url(#cubeside)" />
      <path d="M1792 269l35 20 35-20M1827 289v40" fill="none" stroke="#444" strokeWidth=".8" />
      <text {...face} fontSize="9" transform="translate(1835 268) rotate(205)">TOP</text>
      <text {...face} fontSize="8" transform="translate(1800 298) skewY(28)">BACK</text>
      <text {...face} fontSize="8" transform="translate(1836 308) skewY(-28)">LEFT</text>
    </svg>
  );
}

function NavBar() {
  const s = { stroke: "#3f3f3f", fill: "none" };
  return (
    <nav aria-label="Navigation" className="absolute right-[3px] top-[211px] flex h-[213px] w-8 flex-col items-center rounded-[4px] border border-[#4a4a4a] bg-[#646464]">
      <button aria-label="Close" className="mr-[2px] mt-[2px] self-end"><svg width="8" height="8" viewBox="0 0 8 8"><circle cx="4" cy="4" r="3.500" {...s} /><path d="M2.500 2.500l3 3M5.500 2.500l-3 3" {...s} /></svg></button>
      <button aria-label="Steering wheel" className="mt-2"><svg width="24" height="24" viewBox="0 0 24 24"><path d="M12 1h10v11A10.500 10.500 0 1 1 12 1z" {...s} /><circle cx="12" cy="12" r="6" {...s} /><circle cx="12" cy="12" r="9" {...s} strokeOpacity=".4" /><path d="M8 16l-3 3M16 16l3 3" {...s} /></svg></button>
      <span className="mt-[6px]"><Arrow color="#333" /></span>
      <span className="mt-1 h-px w-6 bg-[#777]" />
      <button aria-label="Pan" className="mt-1"><svg width="24" height="24" viewBox="0 0 24 24"><path d="M8 22C6 18 3 15 1 12c1-2 3-1 6 2L5 4c1-2 2-1 3 0l2 7V2c1-1 3-1 3 0v9l3-8c1-1 3 0 2 2l-2 8 4-6c2 0 2 1 1 3l-3 8-2 4z" {...s} /></svg></button>
      <button aria-label="Zoom" className="mt-1"><svg width="24" height="24" viewBox="0 0 24 24"><path d="M2 2l14 14M16 2L2 16M1 6V1h5M12 1h5v5M1 12v5h5" {...s} /><circle cx="16" cy="16" r="5" {...s} fill="#646464" /><path d="M19 19l4 4" {...s} strokeWidth="2.500" /></svg></button>
      <span className="mt-[6px]"><Arrow color="#333" /></span>
      <button aria-label="Orbit" className="mt-1"><svg width="24" height="24" viewBox="0 0 24 24"><path d="M10 5H8l4-4 4 4h-2v18h-4z" {...s} /><path d="M8 10C-2 12-1 17 6 17M16 10c9 2 9 7 0 8" {...s} /><path d="M8 13v8l-5-4z" fill="#3f3f3f" /></svg></button>
      <span className="mt-[5px]"><Arrow color="#333" /></span>
      <span className="mt-1 h-px w-6 bg-[#777]" />
      <button aria-label="ShowMotion" className="mt-[3px]"><svg width="24" height="24" viewBox="0 0 24 24"><path d="M1 1h6v6H1zM9 1h6v6H9zM17 1h6v6h-6zM1 10h16v13H1z" {...s} /><path d="M6 12l7 4-7 4z" fill="#3f3f3f" /></svg></button>
      <button aria-label="Options" className="mb-[2px] mr-[2px] mt-auto self-end"><svg width="8" height="8" viewBox="0 0 8 8"><circle cx="4" cy="4" r="3.500" {...s} /><path d="M2 4h4" {...s} /></svg></button>
    </nav>
  );
}

function CommandLine() {
  return (
    <div className="absolute bottom-0 left-[379px] w-[1143px] max-w-full font-['DejaVu_Sans_Mono',monospace] text-[12px]">
      <div className="mb-[2px] flex flex-col items-start gap-[5px] pl-[62px] leading-[15px]">
        <p className="whitespace-pre rounded-[2px] bg-[#535353] px-[2px] text-[#bdbdbd]">{"Autodesk DWG.  This file is a TrustedDWG last saved by an Autodesk application or Autodesk licensed application."}</p>
        <p className="rounded-[2px] bg-[#575757] px-[2px] text-[#d8d8d8]">Command:</p>
        <p className="rounded-[2px] bg-[#606060] px-[2px] text-white">Command:</p>
      </div>
      <div className="flex h-[27px] items-center rounded-[2px] border border-[#6a6a6a] bg-[#bcbdbf]">
        <div className="flex h-full w-[55px] items-center bg-linear-to-b from-[#707070] to-[#3a3a3a] pl-[3px]">
          <svg width="6" height="18" viewBox="0 0 6 18" aria-hidden="true"><path d="M1 0v18M4.500 0v18" stroke="#aaa" strokeWidth="2" strokeDasharray="2 1" /></svg>
          <button aria-label="Close command line" className="ml-[5px]"><svg width="10" height="10" viewBox="0 0 10 10"><path d="M1 1l8 8M9 1l-8 8" stroke="#ccc" strokeWidth="2" /></svg></button>
          <button aria-label="Customize" className="ml-[11px]"><svg width="14" height="14" viewBox="0 0 14 14"><path d="M1 13l7-7" stroke="#ccc" strokeWidth="2.500" /><path d="M10 0C7 1 6 4 8 6s5 1 6-2l-3 1-2-2z" fill="#ccc" /></svg></button>
        </div>
        <button aria-label="Recent commands" className="ml-[5px] flex items-center gap-[3px]">
          <svg width="16" height="13" viewBox="0 0 16 13"><path d="M.5 .5h15v12H.5z" fill="none" stroke="#555" /><path d="M0 1.500h16" stroke="#555" strokeWidth="2" /><path d="M2 5l3 2-3 2M6 9.500h4" stroke="#444" fill="none" /></svg>
          <Arrow color="#555" />
        </button>
        <input aria-label="Command" placeholder="Type a command" className="ml-[7px] min-w-0 flex-1 bg-transparent italic outline-none placeholder:text-[#777]" />
        <button aria-label="History" className="mr-[3px] rotate-180"><Arrow big color="#111" /></button>
      </div>
    </div>
  );
}

function Canvas() {
  return (
    <main className="relative min-h-0 flex-1 overflow-hidden bg-[#212830]">
      <div className="absolute left-[3px] top-1 text-[12px] leading-5 text-[#e8e8e8]">[−][SE Isometric][Conceptual]</div>
      <svg width="80" height="90" viewBox="658 212 80 90" className="absolute left-[648px] top-[29px]" aria-hidden="true">
        <path d="M660 243L735 286" stroke="#c07860" /><path d="M660 301L735 258" stroke={G} /><path d="M709.500 214v87" stroke="#6c9cd0" />
        <path d="M706.500 268.500h6v6h-6z" fill="#212830" stroke="#fff" />
      </svg>
      <Model />
      <svg width="60" height="85" viewBox="20 882 60 85" className="absolute bottom-[28px] left-[10px]" fontFamily="Inter, sans-serif" fontWeight="100" role="img" aria-label="UCS icon">
        <path d="M60.500 944L26 963" stroke="#8a8a8a" strokeWidth="4" /><path d="M60 943L26 923" stroke="#d08060" strokeWidth="4" /><path d="M60 943L26 923" stroke="#f0c090" strokeDasharray="1 2" />
        <path d="M60.500 945V903" stroke="#5a5f9e" strokeWidth="4" /><path d="M58 903h3v3h-3z" fill={B} /><path d="M25 961h3v3h-3z" fill={G} />
        <text x="59" y="900" fontSize="18" fill="#5a62a8">Z</text><text x="22" y="919" fontSize="17" fill="#b83434">X</text><text x="22" y="959" fontSize="17" fill={G}>Y</text>
      </svg>
      <div className="absolute right-[11px] top-[9px] flex items-center gap-2">
        <button aria-label="Minimize drawing"><svg width="12" height="12" viewBox="0 0 12 12"><path d="M1 8h10v3H1z" fill="#eee" /></svg></button>
        <button aria-label="Restore drawing"><svg width="12" height="12" viewBox="0 0 12 12"><path d="M3 1h8v8" stroke="#eee" fill="none" /><path d="M2 4h6v6H2z" stroke="#eee" strokeWidth="2" fill="none" /></svg></button>
        <button aria-label="Close drawing"><svg width="10" height="10" viewBox="0 0 10 10"><path d="M1 1l8 8M9 1l-8 8" stroke="#fff" strokeWidth="2.500" /></svg></button>
      </div>
      <ViewCube />
      <button className="absolute right-12 top-[193px] flex h-[17px] w-[68px] items-center justify-between rounded-[4px] border border-[#8c8c90] bg-[#a2a3aa] pl-[3px] pr-1 text-[10px] text-[#48484c]">
        Unnamed
        <svg width="9" height="5" viewBox="0 0 9 5" className="shrink-0" aria-hidden="true"><path d="M1 .5h7L4.500 4z" fill="#c4c4c8" stroke="#777" /></svg>
      </button>
      <NavBar />
      <CommandLine />
    </main>
  );
}

const cell = "flex h-full items-center border-r border-[#787878]";
function SB({ label, on, w = "w-[22px]", children }: Kids & { label: string; on?: boolean; w?: string }) {
  return (
    <button aria-label={label} className={`${w} flex h-[22px] items-center justify-center ${on ? "bg-[#628fc4]" : ""}`}>
      {children}
    </button>
  );
}
const compass = <path d="M8 0l2 6 5 10-7-4-7 4 5-10z" fill={W} stroke="none" />;

function StatusBar() {
  return (
    <div className="flex h-[27px] items-center border border-[#787878] bg-[#4c4c4c] text-[12px] text-white">
      <div className={`${cell} w-[50px] justify-center`}><button>MODEL</button></div>
      <div className={`${cell} w-[66px] pl-px`}>
        <SB label="Grid" w="w-[24px]"><Ico><path d="M4.500 0v16M8.500 0v16M12.500 0v16M0 4.500h16M0 8.500h16M0 12.500h16" strokeWidth="1.300" /></Ico></SB>
        <SB label="Snap" w="w-[24px]"><Ico><path d="M2 3.500h14M2 8.500h14M2 13.500h14" strokeWidth="2" strokeDasharray="2 3" /></Ico></SB>
        <SB label="Snap options" w="w-[14px]"><Arrow /></SB>
      </div>
      <div className={`${cell} w-[103px] pl-px`}>
        <SB label="Ortho" on><Ico><path d="M2.500 0v14.500H16M2.500 10.500h4v4" stroke="#fff" strokeWidth="1.300" /></Ico></SB>
        <SB label="Polar" w="w-[26px]"><Ico><circle cx="7" cy="9" r="5.500" /><path d="M7 9h9M7 9l7-8M12 7v5" /></Ico></SB>
        <SB label="Polar options" w="w-[14px]"><Arrow /></SB>
        <SB label="Isodraft" w="w-[24px]"><Ico><path d="M8.500 0v16" stroke={G} /><path d="M2 1l12 14" stroke="#c07860" /><circle cx="8.500" cy="8" r="1.500" /></Ico></SB>
        <SB label="Isodraft options" w="w-[14px]"><Arrow /></SB>
      </div>
      <div className={`${cell} w-[66px] gap-[2px] pl-px`}>
        <SB label="Object snap tracking" on><Ico><path d="M0 14.500h16M1 14L13 1" stroke="#fff" strokeWidth="1.300" /><circle cx="7" cy="7.500" r="1.500" fill="#fff" /></Ico></SB>
        <SB label="Object snap" on><Ico><path d="M6 3.500h9v12H2V7" stroke="#fff" strokeWidth="1.300" /><path d="M.5 .5h4v4h-4z" stroke="#fff" strokeWidth="1.300" /></Ico></SB>
        <SB label="Snap modes" w="w-[14px]"><Arrow /></SB>
      </div>
      <div className={`${cell} w-[122px] pl-px`}>
        <SB label="Annotation visibility" on><Ico>{compass}<circle cx="13" cy="4" r="2" stroke="#fff" /></Ico></SB>
        <SB label="Auto scale" w="w-[26px]"><Ico>{compass}<path d="M14 0l-4 5h5l-4 4" stroke="#eee" /></Ico></SB>
        <SB label="Annotation scale icon"><Ico>{compass}</Ico></SB>
        <button className="ml-[6px] flex items-center gap-1">1:100 <Arrow big /></button>
      </div>
      <div className={`${cell} w-[42px] justify-between pl-[3px] pr-[5px]`}>
        <SB label="Workspace" w="w-[18px]"><Ico><circle cx="8" cy="8" r="4" strokeWidth="3.500" /><circle cx="8" cy="8" r="7" strokeWidth="2" strokeDasharray="2.750 2.750" /></Ico></SB>
        <Arrow big />
      </div>
      <div className={`${cell} w-[26px] justify-center`}><SB label="Monitor"><Ico><path d="M8 0v16M0 8h16" strokeWidth="2" /></Ico></SB></div>
      <div className={`${cell} w-[27px] justify-center`}><SB label="Isolate"><Ico><path d="M1 1h5v5H1z" strokeWidth="1.300" /><circle cx="12.500" cy="6" r="2.800" strokeWidth="1.300" /><path d="M7 10l3 5H4z" strokeWidth="1.300" /></Ico></SB></div>
      <div className={`${cell} w-[51px] justify-center`}>
        <SB label="Trusted DWG"><Ico><path d="M1 0h7l4 3v10H1z" fill={B} stroke="none" /><path d="M1 4h11M1 7h11M5 0v9M8 0v9" stroke="#e8f4ff" strokeWidth=".7" /><path d="M0 10h7v5H0z" fill={Y} stroke="none" /><path d="M9 12l2 3 5-5" stroke={G} strokeWidth="1.500" /></Ico></SB>
        <SB label="Standards"><Ico><path d="M1 0h13v10H1z" fill="#ddd" stroke="none" /><path d="M0 8l5-5 4 4 4-6" stroke="#4a5a90" /><path d="M11 6l5 10H6z" fill="#c87858" stroke="none" /><path d="M11 9v4" stroke="#fff" /></Ico></SB>
      </div>
      <div className="flex w-[49px] items-center justify-center gap-[2px]">
        <SB label="Clean screen"><Ico><path d="M.5 2.500h15v11H.5z" /><path d="M9 5h4v4zM3 7v4h4z" fill={W} stroke="none" /></Ico></SB>
        <SB label="Customization"><Ico><path d="M0 2h16M0 8h16M0 14h16" strokeWidth="2" /></Ico></SB>
      </div>
    </div>
  );
}

export default function App() {
  return (
    <div className="relative flex h-screen flex-col overflow-hidden bg-[#dcdddd] px-[10px] pb-[11px] pt-[2px] font-['Noto_Sans',sans-serif] text-[12px]">
      <div className="absolute inset-x-0 top-20 h-px bg-[#bbb]" />
      <div className="absolute inset-x-0 top-[127px] h-px bg-[#bbb]" />
      <div className="absolute left-[2px] top-[806px] h-8 w-4 border border-[#888] bg-[#b5b5b5]" />
      <div className="absolute bottom-[3px] right-[27px] h-5 w-6 border border-[#5560a0]" />
      <div className="absolute inset-x-0 bottom-[2px] h-px bg-[#bbb]" />
      <div className="absolute right-[3px] top-[330px] h-[2px] w-[3px] bg-[#b03080]" />
      <div className="absolute right-0 top-[727px] text-[10px] font-bold italic text-[#222]">M</div>
      <div className="relative flex min-h-0 flex-1 flex-col overflow-hidden rounded-[8px] bg-[#383838] shadow-[0_0_3px_#888]">
        <header className="relative">
          <div className="flex h-8 bg-white pl-10">
            <QuickAccess />
            <h1 className="flex flex-1 items-center justify-center gap-[14px] pb-px text-[12px] text-[#111]"><span>Autodesk AutoCAD 2019</span><span>model751-DualSocket.dwg</span></h1>
            <InfoCenter />
            <div className="flex text-black">
              <button aria-label="Minimize" className="flex w-[46px] items-center justify-center"><svg width="10" height="10" viewBox="0 0 10 10"><path d="M0 5.500h10" stroke="#000" /></svg></button>
              <button aria-label="Maximize" className="flex w-[46px] items-center justify-center"><svg width="10" height="10" viewBox="0 0 10 10"><rect x=".5" y=".5" width="9" height="9" rx="1" stroke="#000" fill="none" /></svg></button>
              <button aria-label="Close" className="flex w-[46px] items-center justify-center"><svg width="10" height="10" viewBox="0 0 10 10"><path d="M0 0l10 10M10 0L0 10" stroke="#000" /></svg></button>
            </div>
          </div>
          <nav className="flex h-5 items-center border-t border-[#333] bg-[#535353] pl-[46px] text-[#d0d0d0]">
            <button className="mr-[10px] h-[18px] w-[51px] self-end rounded-t-[2px] border border-b-0 border-[#333] bg-linear-to-b from-[#6e6e6e] to-[#5c5c5c] leading-4 text-white">Home</button>
            {menuTabs.map(([t, w]) => (
              <button key={t} className={`${w} whitespace-nowrap text-left`}>{t}</button>
            ))}
            <button aria-label="Minimize ribbon" className="flex items-center gap-[6px]">
              <svg width="14" height="8" viewBox="0 0 14 8"><rect width="14" height="8" rx="2" fill="#eee" /><path d="M7 2l3 4H4z" fill="#444" /></svg>
              <Arrow />
            </button>
          </nav>
          <button aria-label="Application menu" className="absolute left-0 top-2 flex size-[41px] items-start border border-black bg-linear-to-b from-[#c0c0c0] via-[#8a8a8a] to-[#6c6c6c] pl-1 pt-[2px]">
            <svg width="24" height="28" viewBox="0 0 24 28"><path d="M8 0h8l7 26h-6l-2-7H8l-3 7H0z" fill="#c1272d" /><path d="M12 5l2 9H9z" fill="#9b9b9b" /><path d="M1 20l8-5-2 5-2 6H0z" fill="#5a1418" /><path d="M0 26l5-8-1 8zM15 19l6 7h-4z" fill="#e8907c" /></svg>
            <span className="mt-4 pl-[2px]"><Arrow big color="#222" /></span>
          </button>
        </header>
        <Ribbon />
        <div className="flex h-[30px] items-end border-b-4 border-[#5a5a5a] pl-3 text-[#b4acb0]">
          <svg width="10" height="22" viewBox="0 0 10 22" aria-hidden="true"><path d="M0 22C8 20 6 6 10 2v20z" fill="#555" /></svg>
          {fileTabs.map(([t, w], i) => {
            const active = i === fileTabs.length - 1;
            return (
              <div
                key={t}
                className={`${w} flex h-[22px] shrink-0 items-center justify-between whitespace-nowrap rounded-tl-[7px] rounded-tr-[10px] border-r border-t pl-[10px] pr-[10px] ${
                  active ? "border-[#9a9a9a] bg-linear-to-b from-[#6a6a6a] to-[#8c8c8c] text-white" : "border-[#6a6a6a] bg-linear-to-b from-[#4d4d4d] to-[#5e5e5e]"
                }`}
              >
                <button>{t}</button>
                {i > 0 && (
                  <button aria-label={`Close ${t}`}><svg width="7" height="7" viewBox="0 0 7 7"><path d="M.5 .5l6 6M6.500 .5l-6 6" stroke="#333" strokeWidth="2" /></svg></button>
                )}
              </div>
            );
          })}
          <button aria-label="New drawing" className="mb-[3px] ml-1 flex h-[14px] w-[22px] items-center justify-center rounded-bl-[10px] rounded-tr-[8px] bg-[#5c5c5c]">
            <svg width="8" height="8" viewBox="0 0 8 8"><path d="M4 0v8M0 4h8" stroke="#ccc" strokeWidth="2" /></svg>
          </button>
        </div>
        <Canvas />
        <footer className="flex h-[29px] items-start pl-3 text-[#b4b0b8]">
          <button className="h-[17px] w-[58px] rounded-b-[8px] bg-linear-to-b from-[#606060] to-[#8a8a8a] font-bold leading-4 text-white">Model</button>
          <button className="ml-[2px] h-[17px] w-[61px] rounded-b-[8px] bg-[#5c5c5c] leading-4">Layout1</button>
          <button aria-label="New layout" className="ml-1 flex h-4 w-[23px] items-center justify-center rounded-br-[12px] rounded-tl-[8px] bg-[#5a5a5a]">
            <svg width="8" height="8" viewBox="0 0 8 8"><path d="M4 0v8M0 4h8" stroke="#ddd" strokeWidth="2" /></svg>
          </button>
          <div className="ml-auto"><StatusBar /></div>
        </footer>
      </div>
    </div>
  );
}
